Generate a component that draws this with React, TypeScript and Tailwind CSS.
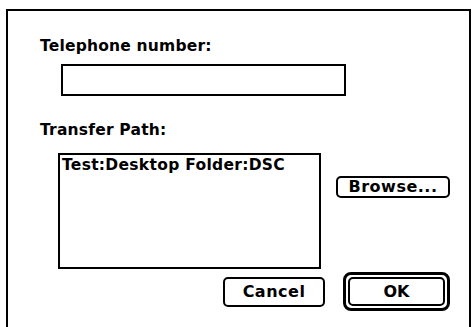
export default function App() {
  return (
    <div className="w-[472px] h-[327px] bg-white overflow-hidden pt-[9px] pl-[6px] pr-[1px]">
      <div
        className="h-[330px] border-t-2 border-l-2 border-r-2 border-black pl-[32px] pt-[26px] text-black"
        style={{ fontFamily: '"DejaVu Sans", sans-serif' }}
      >
        <div className="text-[15.5px] font-bold leading-[18px] tracking-[0.2px]">Telephone number:</div>
        <div className="ml-[21px] mt-[9px] w-[285px] h-[32px] border-2 border-black" />

        <div className="text-[15.5px] font-bold leading-[18px] mt-[25px] tracking-[0.2px]">Transfer Path:</div>
        <div className="flex items-start mt-[14px]">
          <div className="ml-[18px] w-[263px] h-[116px] border-2 border-black pl-[2px] pt-[2px] text-[15.5px] font-bold leading-[17px] tracking-[0.3px]">
            Test:Desktop Folder:DSC
          </div>
          <button className="ml-[15px] mt-[23px] w-[114px] h-[22px] border-2 border-black rounded-[5px] text-[16px] font-bold leading-none bg-white tracking-[0.5px]">
            Browse...
          </button>
        </div>

        <div className="flex items-center mt-[3px] ml-[183px]">
          <button className="w-[102px] h-[30px] border-2 border-black rounded-[5px] text-[16px] font-bold leading-none bg-white tracking-[0.5px]">
            Cancel
          </button>
          <div className="ml-[18px] w-[107px] h-[39px] border-[3px] border-black rounded-[8px] p-[2px]">
            <button className="w-full h-full border-2 border-black rounded-[5px] text-[16px] font-bold leading-none bg-white">
              OK
            </button>
          </div>
        </div>
      </div>
    </div>
  )
}
